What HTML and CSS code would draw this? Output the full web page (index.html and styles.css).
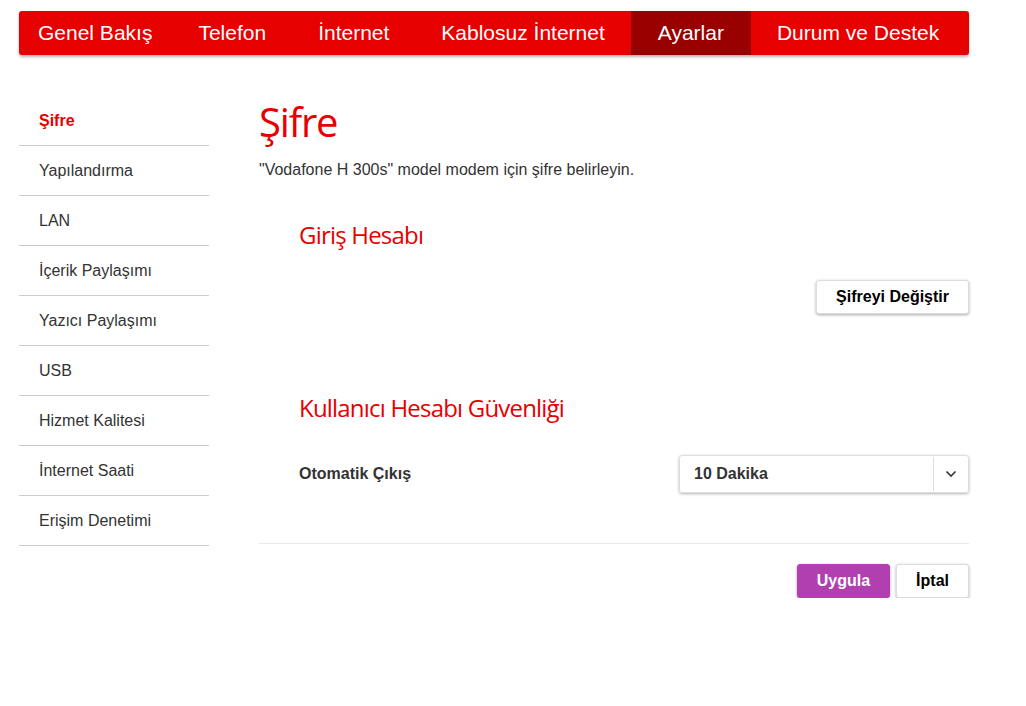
FILE: index.html
```html
<!DOCTYPE html>
<html lang="tr">
<head>
	<meta charset="UTF-8">
	<title>Ayarlar - Şifre</title>
	<link rel="stylesheet" href="styles.css">
</head>

<body>
	<nav class="topnav">
		<a href="#" class="topnav-item">Genel Bakış</a>
		<a href="#" class="topnav-item">Telefon</a>
		<a href="#" class="topnav-item">İnternet</a>
		<a href="#" class="topnav-item">Kablosuz İnternet</a>
		<a href="#" class="topnav-item active">Ayarlar</a>
		<a href="#" class="topnav-item">Durum ve Destek</a>
	</nav>

	<div class="page">
		<aside class="sidemenu">
			<a href="#" class="sidemenu-item active">Şifre</a>
			<a href="#" class="sidemenu-item">Yapılandırma</a>
			<a href="#" class="sidemenu-item">LAN</a>
			<a href="#" class="sidemenu-item">İçerik Paylaşımı</a>
			<a href="#" class="sidemenu-item">Yazıcı Paylaşımı</a>
			<a href="#" class="sidemenu-item">USB</a>
			<a href="#" class="sidemenu-item">Hizmet Kalitesi</a>
			<a href="#" class="sidemenu-item">İnternet Saati</a>
			<a href="#" class="sidemenu-item">Erişim Denetimi</a>
		</aside>

		<main class="content">
			<h1 class="page-title">Şifre</h1>
			<p class="page-desc">"Vodafone H 300s" model modem için şifre belirleyin.</p>

			<section class="block">
				<h2 class="block-title">Giriş Hesabı</h2>
				<div class="row row-end">
					<button type="button" class="btn">Şifreyi Değiştir</button>
				</div>
			</section>

			<section class="block block-security">
				<h2 class="block-title">Kullanıcı Hesabı Güvenliği</h2>
				<div class="row">
					<label class="field-label" for="logout">Otomatik Çıkış</label>
					<div class="select">
						<span class="select-value" id="logout">10 Dakika</span>
						<span class="select-arrow">
							<svg width="12" height="8" viewBox="0 0 12 8"><path d="M1.5 1.5 L6 6 L10.5 1.5" fill="none" stroke="#333" stroke-width="1.6"/></svg>
						</span>
					</div>
				</div>
			</section>

			<div class="actions">
				<button type="button" class="btn btn-primary">Uygula</button>
				<button type="button" class="btn">İptal</button>
			</div>
		</main>
	</div>
</body>
</html>
```

FILE: styles.css
```css
body {
	font-family: "Liberation Sans", Arial, Helvetica, sans-serif;
	background-color: white;
	color: #333;
	margin: 0;
	padding: 11px 19px 0;
	width: 950px;
}

/* top navigation */
.topnav {
	display: flex;
	height: 44px;
	background-color: #e60000;
	border-radius: 3px;
	box-shadow: 0 2px 3px rgba(0, 0, 0, 0.3);
	overflow: hidden;
}
.topnav-item {
	display: flex;
	align-items: center;
	padding: 0 26px;
	color: white;
	font-size: 21px;
	text-decoration: none;
}
.topnav-item:first-child {
	padding: 0 20px 0 19px;
}
.topnav-item.active {
	background-color: #990000;
	padding: 0 27px;
}

.page {
	display: flex;
	padding-top: 41px;
}

/* left menu */
.sidemenu {
	width: 190px;
	flex-shrink: 0;
}
.sidemenu-item {
	display: block;
	height: 49px;
	line-height: 49px;
	padding-left: 20px;
	border-bottom: 1px solid #ccc;
	color: #333;
	font-size: 16px;
	text-decoration: none;
}
.sidemenu-item.active {
	color: #e60000;
	font-weight: bold;
}

/* main area */
.content {
	flex: 1;
	margin-left: 50px;
}
.page-title {
	font-family: "Open Sans", sans-serif;
	font-weight: normal;
	font-size: 40px;
	letter-spacing: -1.2px;
	color: #e60000;
	margin: 1px 0 0;
	line-height: 50px;
}
.page-desc {
	font-size: 16px;
	margin: 14px 0 0;
}

.block {
	padding-left: 40px;
}
.block-title {
	font-family: "Open Sans", sans-serif;
	font-weight: normal;
	font-size: 24px;
	letter-spacing: -0.8px;
	color: #e60000;
	margin: 39px 0 0;
}
.block-security .block-title {
	margin-top: 77px;
}
.row {
	display: flex;
	align-items: center;
	justify-content: space-between;
	margin-top: 29px;
}
.block-security .row {
	margin-top: 31px;
}
.row-end {
	justify-content: flex-end;
}
.field-label {
	font-weight: bold;
	font-size: 16px;
}

.btn {
	font-family: "Liberation Sans", Arial, sans-serif;
	font-weight: bold;
	font-size: 16px;
	color: black;
	background: white;
	border: 1px solid #ddd;
	border-radius: 3px;
	box-shadow: 0 1px 3px rgba(0, 0, 0, 0.35);
	height: 34px;
	padding: 0 19px;
}
.btn-primary {
	background-color: #b13fb0;
	border-color: #b13fb0;
	color: white;
}

.select {
	display: flex;
	width: 290px;
	height: 38px;
	border: 1px solid #ddd;
	border-radius: 3px;
	box-shadow: 0 1px 3px rgba(0, 0, 0, 0.3);
	box-sizing: border-box;
}
.select-value {
	flex: 1;
	display: flex;
	align-items: center;
	padding-left: 14px;
	font-weight: bold;
	font-size: 16px;
}
.select-arrow {
	display: flex;
	align-items: center;
	justify-content: center;
	width: 34px;
	border-left: 1px solid #ddd;
	margin: 1px 0;
}

.actions {
	display: flex;
	justify-content: flex-end;
	gap: 6px;
	margin-top: 50px;
	padding-top: 20px;
	border-top: 1px solid #e8e8e8;
}
```
